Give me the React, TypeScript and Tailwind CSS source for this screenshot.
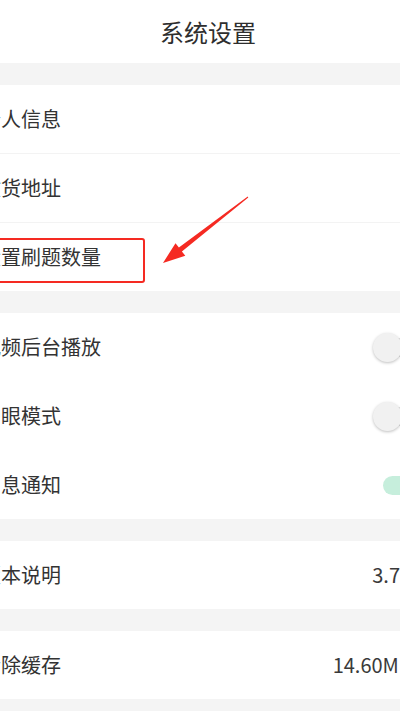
import React from "react";

const font = { fontFamily: '"Noto Sans CJK SC", "Noto Sans", sans-serif' };

const Toggle = ({ on }: { on: boolean }) => (
    <div className={`relative w-[46px] h-[19px] rounded-full ${on ? "bg-[#c6eedc]" : "bg-[#e2e2e2]"}`}>
        <div
            className={`absolute top-[-5px] w-[29px] h-[29px] rounded-full shadow-[0_1px_3px_rgba(0,0,0,0.25)] ${
                on ? "right-[-10px] bg-[#35c48a]" : "left-[-10px] bg-[#f1f1f1]"
            }`}
        />
    </div>
);

const Row = ({ label, right, toggle, pr = "pr-[7px]" }: { label: string; right?: string; toggle?: boolean; pr?: string }) => (
    <div className={`flex items-center justify-between h-[68px] pl-[1px] ${pr}`}>
        <span className="text-[20px] text-[#333]">{label}</span>
        {right && <span className="text-[20px] text-[#3a3a3a]">{right}</span>}
        {toggle !== undefined && <Toggle on={toggle} />}
    </div>
);

const Gap = () => <div className="h-[22px]" />;

export default function App() {
    return (
        <div className="relative w-[400px] h-[711px] overflow-hidden bg-[#f4f4f4]" style={font}>
            <div className="w-[456px] -ml-[20px]">
                <header className="h-[63px] bg-white flex items-center justify-center">
                    <h1 className="text-[24px] text-[#2e2e2e] leading-none">系统设置</h1>
                </header>
                <Gap />

                <section className="bg-white">
                    <Row label="个人信息" />
                    <div className="h-px bg-[#f3f3f3]" />
                    <Row label="收货地址" />
                    <div className="h-px bg-[#f3f3f3]" />
                    <Row label="设置刷题数量" />
                </section>
                <Gap />

                <section className="bg-white">
                    <Row label="视频后台播放" toggle={false} />
                    <div className="h-px bg-white" />
                    <Row label="护眼模式" toggle={false} />
                    <div className="h-px bg-white" />
                    <Row label="消息通知" toggle={true} />
                </section>
                <Gap />

                <section className="bg-white">
                    <Row label="版本说明" right="3.7" pr="pr-[36px]" />
                </section>
                <Gap />

                <section className="bg-white">
                    <Row label="清除缓存" right="14.60MB" pr="pr-[24px]" />
                </section>
            </div>

            {/* annotation: red box + arrow */}
            <div className="absolute left-[-10px] top-[238px] w-[155px] h-[45px] border-2 border-[#f52a22] rounded-[3px]" />
            <svg className="absolute left-0 top-0" width="400" height="711" viewBox="0 0 400 711">
                <polygon
                    points="248.3,197.4 181.9,251.5 185.3,255.8 163,263 175.5,243.2 178.9,247.5 247.7,196.6"
                    fill="#f52a22"
                />
            </svg>
        </div>
    );
}
